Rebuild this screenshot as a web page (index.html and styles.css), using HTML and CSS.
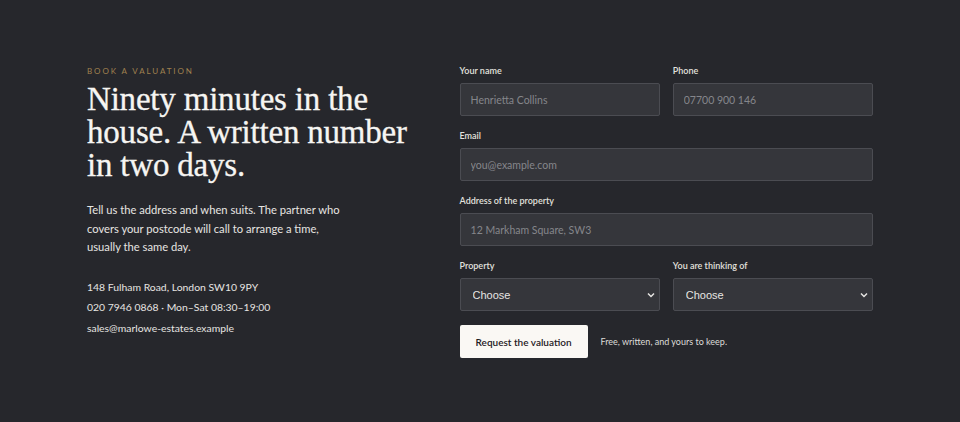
FILE: index.html
```html
<!DOCTYPE html>
<html lang="en">
  <head>
    <meta charset="UTF-8" />
    <meta name="viewport" content="width=device-width, initial-scale=1.0" />
    <title>Book a valuation</title>
    <link rel="stylesheet" href="styles.css">
  </head>
  <body>
    <section class="valuation">
      <div class="intro">
        <p class="eyebrow">Book a valuation</p>
        <h1 class="title">Ninety minutes in the house. A written number in two days.</h1>
        <p class="lead">Tell us the address and when suits. The partner who covers your postcode will call to arrange a time, usually the same day.</p>
        <ul class="contact">
          <li>148 Fulham Road, London SW10 9PY</li>
          <li>020 7946 0868 · Mon–Sat 08:30–19:00</li>
          <li>sales@marlowe-estates.example</li>
        </ul>
      </div>

      <form class="form" onsubmit="return false">
        <div class="row">
          <label class="field">
            <span class="label">Your name</span>
            <input class="input" type="text" placeholder="Henrietta Collins">
          </label>
          <label class="field">
            <span class="label">Phone</span>
            <input class="input" type="tel" placeholder="07700 900 146">
          </label>
        </div>
        <label class="field">
          <span class="label">Email</span>
          <input class="input" type="email" placeholder="you@example.com">
        </label>
        <label class="field">
          <span class="label">Address of the property</span>
          <input class="input" type="text" placeholder="12 Markham Square, SW3">
        </label>
        <div class="row">
          <label class="field">
            <span class="label">Property</span>
            <select class="input select">
              <option>Choose</option>
              <option>Flat</option>
              <option>House</option>
            </select>
          </label>
          <label class="field">
            <span class="label">You are thinking of</span>
            <select class="input select">
              <option>Choose</option>
              <option>Selling</option>
              <option>Letting</option>
            </select>
          </label>
        </div>
        <div class="actions">
          <button class="button" type="submit">Request the valuation</button>
          <span class="note">Free, written, and yours to keep.</span>
        </div>
      </form>
    </section>
  </body>
</html>
```

FILE: styles.css
```css
* {
  box-sizing: border-box;
}
html,
body {
  margin: 0;
  height: 100%;
}
body {
  background: #26272c;
  color: #ecebe8;
  font-family: "Lato", "Noto Sans", sans-serif;
}
section.valuation {
  display: grid;
  grid-template-columns: 4fr 5fr;
  column-gap: 40px;
  max-width: 786px;
  margin: 0 auto;
  padding-top: 65px;
}
div.intro {
  min-width: 0;
}
p.eyebrow {
  margin: 0 0 6px;
  color: #a0814f;
  font-size: 8px;
  letter-spacing: 1.9px;
  text-transform: uppercase;
  line-height: 12px;
}
h1.title {
  margin: 0 0 19px;
  font-family: "Liberation Serif", serif;
  font-weight: 400;
  font-size: 33px;
  line-height: 33px;
  letter-spacing: -0.2px;
  color: #f6f5f2;
  -webkit-text-stroke: 0.3px #f6f5f2;
}
p.lead {
  margin: 0 0 20px;
  max-width: 262px;
  font-size: 11.2px;
  line-height: 18.5px;
  color: #e6e5e2;
}
ul.contact {
  margin: 0;
  padding: 0;
  list-style: none;
  font-size: 10.4px;
  line-height: 20.5px;
  color: #e6e5e2;
}
form.form {
  display: flex;
  flex-direction: column;
  gap: 15px;
  padding-top: 1px;
  padding-left: 1px;
}
div.row {
  display: grid;
  grid-template-columns: 1fr 1fr;
  column-gap: 13px;
}
label.field {
  display: flex;
  flex-direction: column;
  gap: 8px;
}
span.label {
  font-size: 9px;
  font-weight: 600;
  line-height: 9px;
  color: #e2e1de;
}
.input {
  width: 100%;
  height: 33px;
  padding: 0 10px;
  background: #35363b;
  border: 1px solid #4b4c52;
  border-radius: 2px;
  color: #ecebe8;
  font-family: inherit;
  font-size: 10.5px;
  outline: none;
}
.input::placeholder {
  color: #85868b;
}
.select {
  appearance: none;
  -webkit-appearance: none;
  font-family: "Liberation Sans", sans-serif;
  font-size: 11px;
  padding: 0 24px 0 12px;
  color: #e6e5e2;
  background-image: url("data:image/svg+xml,%3Csvg xmlns='http://www.w3.org/2000/svg' width='8' height='6' viewBox='0 0 8 6'%3E%3Cpath d='M1 1.5l3 3 3-3' fill='none' stroke='%23e6e5e2' stroke-width='1.5'/%3E%3C/svg%3E");
  background-repeat: no-repeat;
  background-position: right 4px center;
}
div.actions {
  display: flex;
  align-items: center;
  gap: 13px;
  margin-top: -1px;
}
button.button {
  height: 33px;
  padding: 0 16px;
  background: #faf8f4;
  border: 0;
  border-radius: 2px;
  color: #1f2024;
  font-family: inherit;
  font-size: 10px;
  font-weight: 600;
}
span.note {
  font-size: 9px;
  color: #dddcd9;
}
```
